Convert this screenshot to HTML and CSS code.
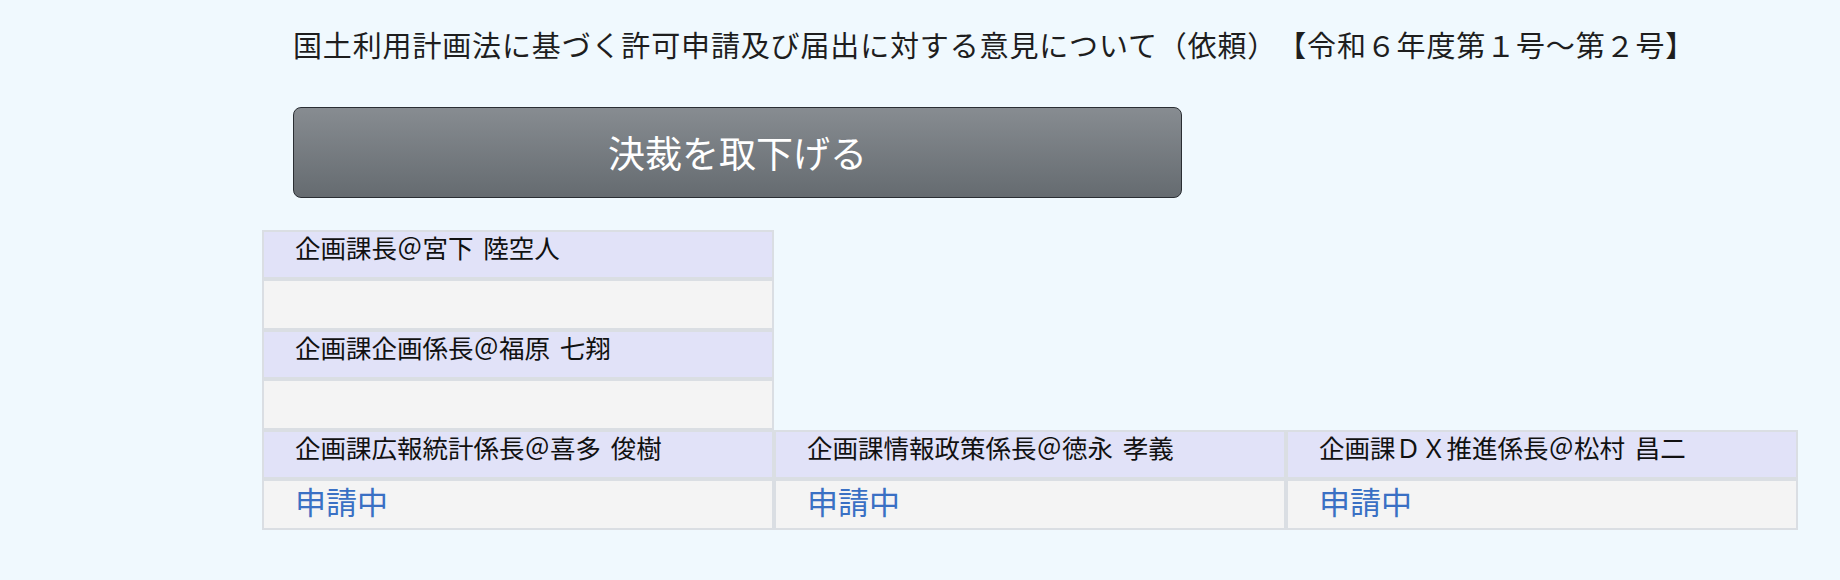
FILE: index.html
```html
<!DOCTYPE html>
<html lang="ja">
<head>
<meta charset="utf-8">
<title>決裁</title>
<link rel="stylesheet" href="styles.css">
</head>
<body>
<div class="page">
  <h1 class="title">国土利用計画法に基づく許可申請及び届出に対する意見について（依頼）【令和６年度第１号～第２号】</h1>
  <button class="withdraw" type="button">決裁を取下げる</button>
  <div class="approvals">
    <div class="stack">
      <div class="cell head">企画課長＠宮下 陸空人</div>
      <div class="cell blank"></div>
      <div class="cell head">企画課企画係長＠福原 七翔</div>
      <div class="cell blank"></div>
    </div>
    <div class="grid">
      <div class="cell head">企画課広報統計係長＠喜多 俊樹</div>
      <div class="cell head">企画課情報政策係長＠徳永 孝義</div>
      <div class="cell head">企画課ＤＸ推進係長＠松村 昌二</div>
      <div class="cell status">申請中</div>
      <div class="cell status">申請中</div>
      <div class="cell status">申請中</div>
    </div>
  </div>
</div>
</body>
</html>
```

FILE: styles.css
```css
html, body {
  margin: 0;
  background: #f0f9fe;
}

body {
  font-family: "Noto Sans CJK JP", "Noto Sans", sans-serif;
  color: #1a1a1a;
  text-spacing-trim: space-all;
}

.page {
  padding: 24px 0 0 262px;
}

.title {
  margin: 0 0 0 31px;
  font-size: 29px;
  font-weight: 400;
  line-height: 40px;
  letter-spacing: 0.85px;
  color: #1e1e1e;
  white-space: nowrap;
  text-spacing-trim: space-all;
}

.withdraw {
  display: block;
  margin: 43px 0 0 31px;
  width: 889px;
  height: 91px;
  border: 1px solid #2a2e33;
  border-radius: 8px;
  background: linear-gradient(#878c91, #656b70);
  color: #ffffff;
  font-family: "Noto Sans CJK JP", sans-serif;
  font-size: 37px;
  line-height: 1;
  padding: 0;
}

.approvals {
  margin-top: 32px;
  display: flex;
  flex-direction: column;
}

.stack {
  width: 512px;
  display: flex;
  flex-direction: column;
}

.grid {
  display: grid;
  grid-template-columns: repeat(3, 512px);
}

.cell {
  box-sizing: border-box;
  border: 2px solid #dadee3;
  padding-left: 31px;
}

.head {
  background: #e1e2f8;
  height: 49px;
  font-size: 25.5px;
  line-height: 30px;
  padding-top: 0;
  word-spacing: 4px;
  color: #111111;
  white-space: nowrap;
}

.blank {
  background: #f4f4f4;
  height: 51px;
}

.status {
  background: #f4f4f4;
  height: 51px;
  font-size: 31px;
  line-height: 40px;
  padding-top: 0;
  color: #3a70c4;
}
```
